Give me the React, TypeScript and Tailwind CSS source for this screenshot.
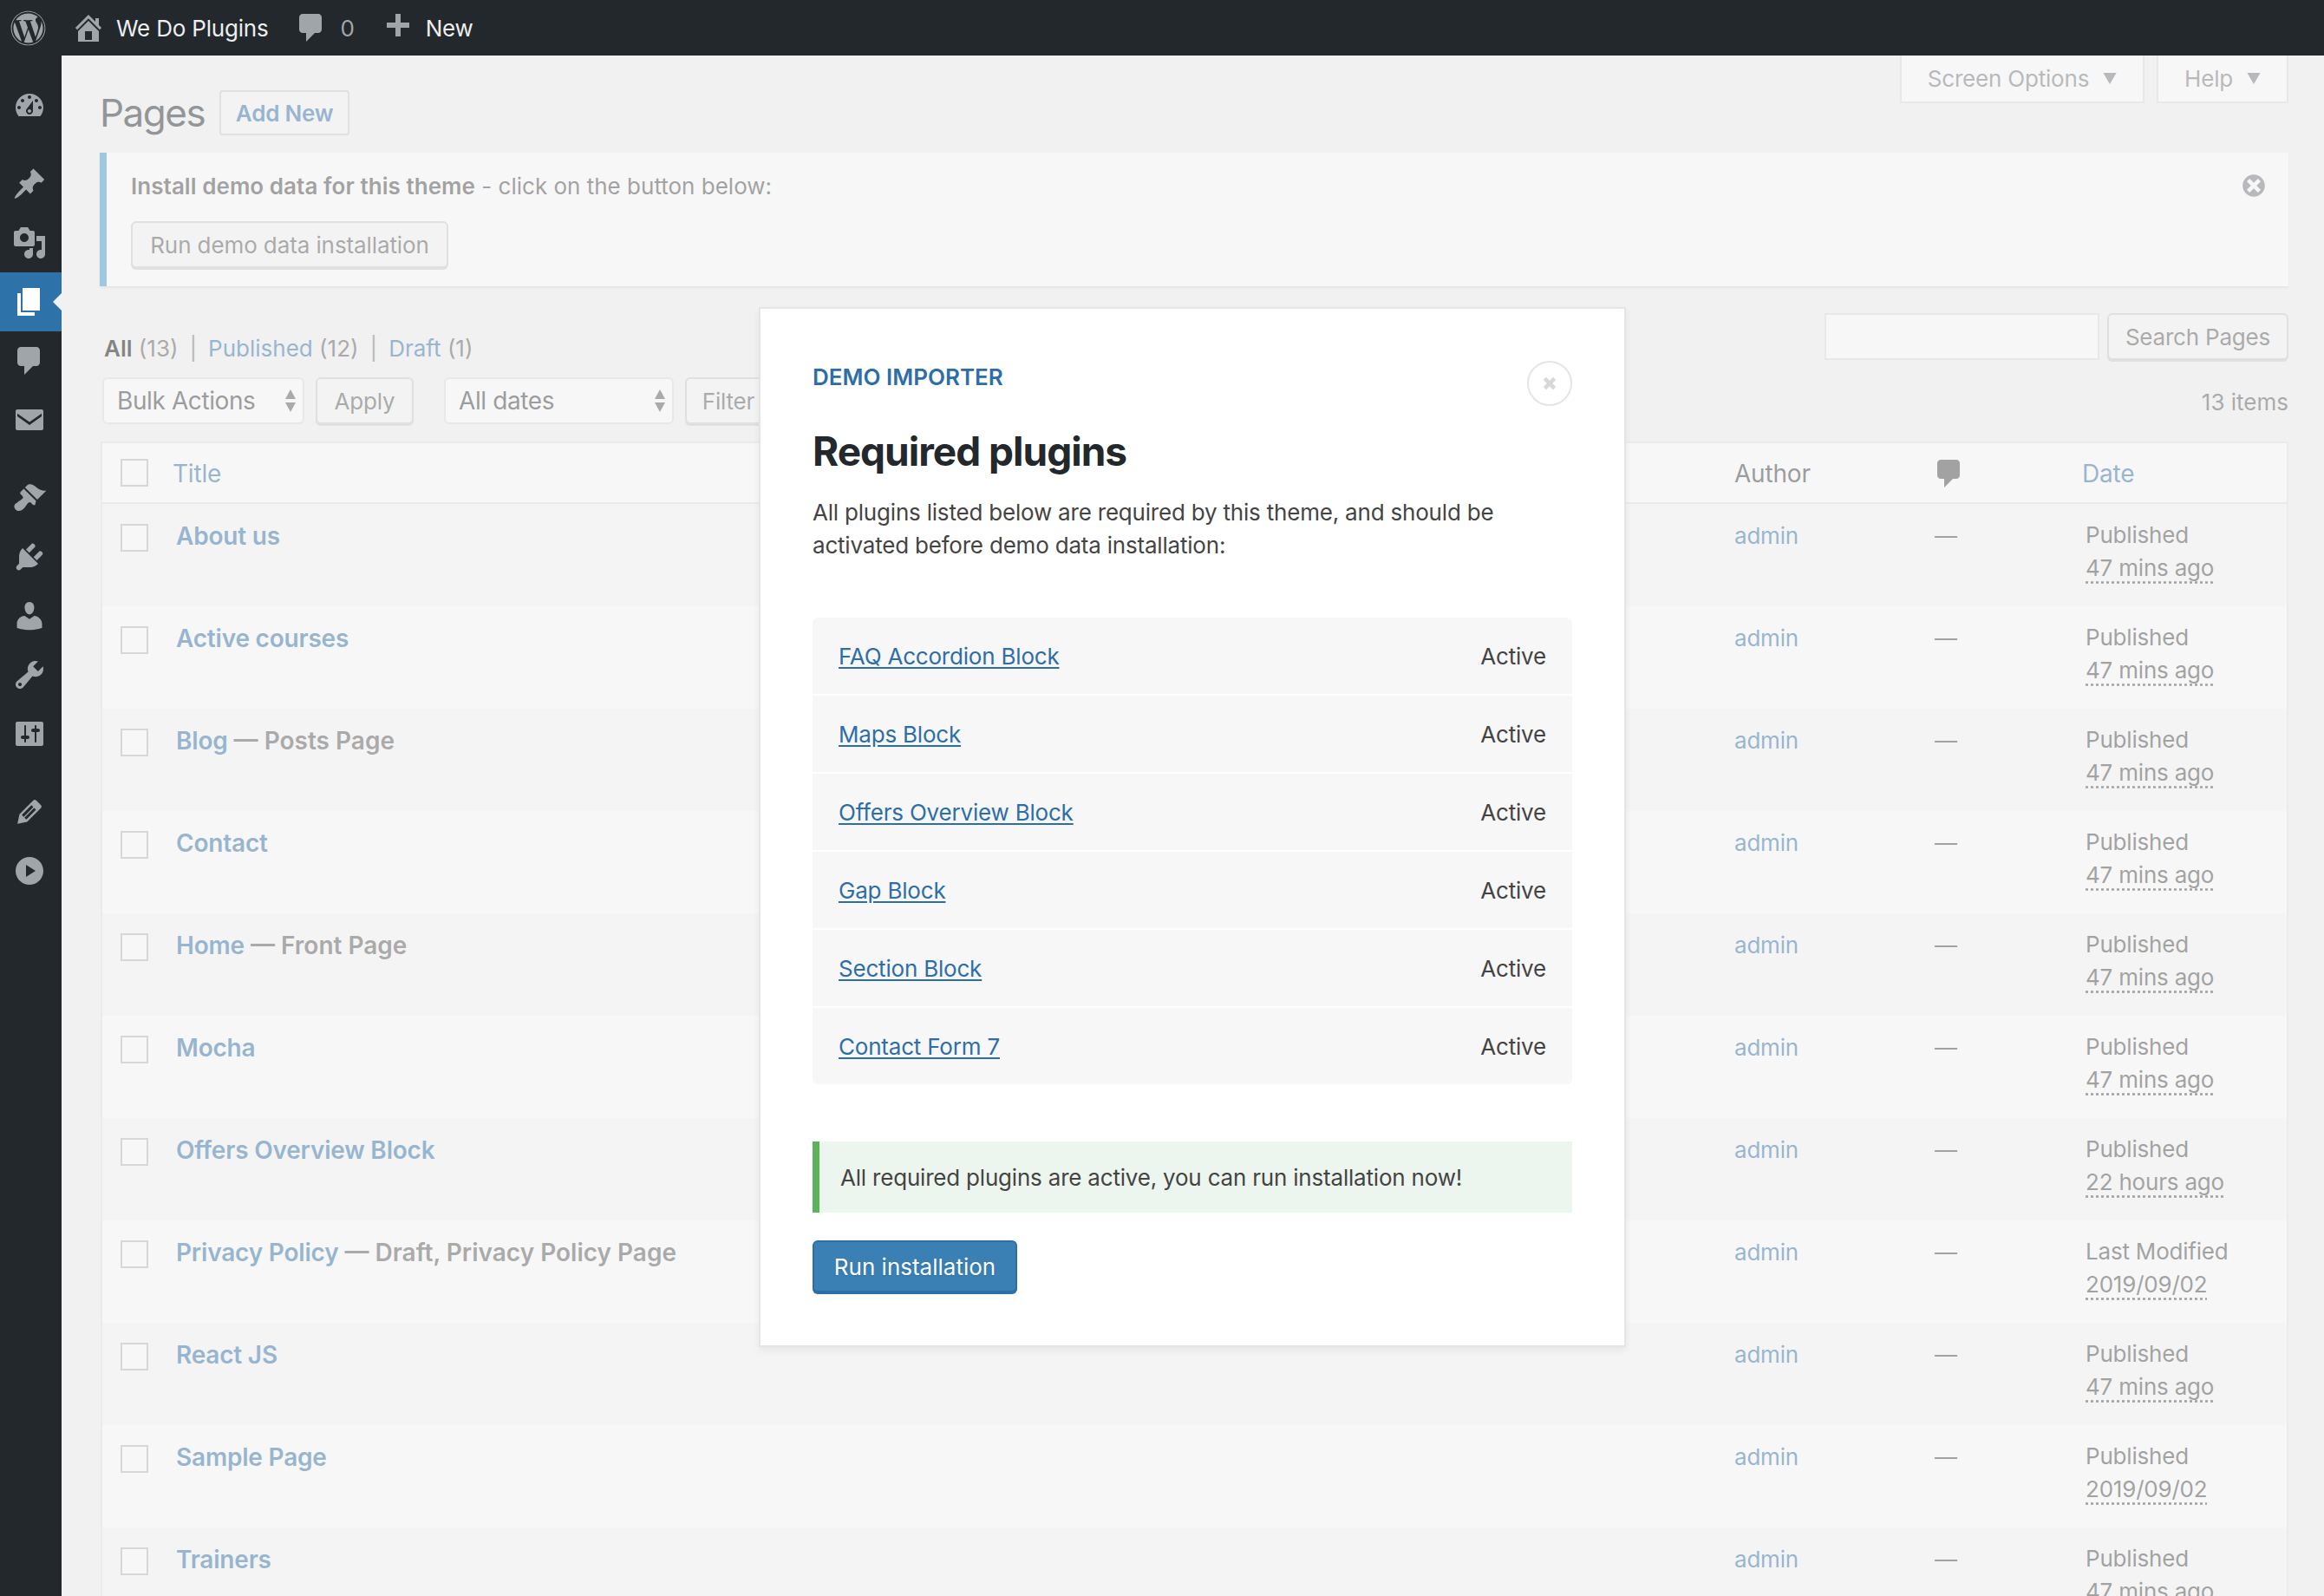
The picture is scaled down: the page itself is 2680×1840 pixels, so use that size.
import React from "react";
import { FaWordpress } from "react-icons/fa";

const P = {
  dashboard: "M3.76 16h12.48c1.1-1.37 1.76-3.11 1.76-5 0-4.42-3.58-8-8-8s-8 3.58-8 8c0 1.89.66 3.63 1.76 5zM10 4c.55 0 1 .45 1 1s-.45 1-1 1-1-.45-1-1 .45-1 1-1zM6 6c.55 0 1 .45 1 1s-.45 1-1 1-1-.45-1-1 .45-1 1-1zm8 0c.55 0 1 .45 1 1s-.45 1-1 1-1-.45-1-1 .45-1 1-1zm-5.37 5.55L12 7v6c0 1.1-.9 2-2 2s-2-.9-2-2c0-.57.24-1.08.63-1.45zM4 10c.55 0 1 .45 1 1s-.45 1-1 1-1-.45-1-1 .45-1 1-1zm12 0c.55 0 1 .45 1 1s-.45 1-1 1-1-.45-1-1 .45-1 1-1zm-5 3c0-.55-.45-1-1-1s-1 .45-1 1 .45 1 1 1 1-.45 1-1z",
  pin: "M10.44 3.02l1.82-1.82 6.36 6.35-1.83 1.82c-1.05-.68-2.48-.57-3.41.36l-.75.75c-.92.93-1.04 2.35-.35 3.41l-1.83 1.82-2.41-2.41-2.8 2.79c-.42.42-3.38 2.71-3.8 2.29s1.86-3.39 2.28-3.81l2.79-2.79L4.1 9.36l1.83-1.82c1.05.69 2.48.57 3.4-.36l.75-.75c.93-.92 1.05-2.35.36-3.41z",
  media: "M13 11V4c0-.55-.45-1-1-1h-1.67L9 1H5L3.67 3H2c-.55 0-1 .45-1 1v7c0 .55.45 1 1 1h10c.55 0 1-.45 1-1zM7 4.5c1.38 0 2.5 1.12 2.5 2.5S8.38 9.5 7 9.5 4.5 8.38 4.5 7 5.62 4.5 7 4.5zM14 6h5v10.5c0 1.38-1.12 2.5-2.5 2.5S14 17.88 14 16.5s1.12-2.5 2.5-2.5c.17 0 .34.02.5.05V9h-3V6zm-4 8.05V13h2v3.5c0 1.38-1.12 2.5-2.5 2.5S7 17.88 7 16.5 8.12 14 9.5 14c.17 0 .34.02.5.05z",
  page: "M6 15V2h10v13H6zm-1 1h8v2H3V5h2v11z",
  comment: "M5 2h9c1.1 0 2 .9 2 2v7c0 1.1-.9 2-2 2h-2l-5 5v-5H5c-1.1 0-2-.9-2-2V4c0-1.1.9-2 2-2z",
  mail: "M3 4h14c.55 0 1 .45 1 1v10c0 .55-.45 1-1 1H3c-.55 0-1-.45-1-1V5c0-.55.45-1 1-1zm0 2.4v1.6l7 5 7-5V6.4l-7 4.8z",
  brush: "M14.48 11.06L7.41 3.99l1.5-1.5c.5-.56 2.3-.47 3.51.32 1.21.8 1.43 1.28 2.91 2.1 1.18.64 2.45 1.26 4.45.85zm-.71.71L6.7 4.7 4.93 6.47c-.39.39-.39 1.02 0 1.41l1.06 1.06c.39.39.39 1.03 0 1.42-.6.6-1.43 1.11-2.21 1.69-.35.26-.7.53-1.01.84C1.43 13.23.5 15.19 2.03 16.72c1.53 1.53 3.49.6 4.83-.74.31-.31.58-.66.84-1.01.58-.78 1.09-1.61 1.69-2.21.39-.39 1.03-.39 1.42 0l1.06 1.06c.39.39 1.02.39 1.41 0z",
  plug: "M13.11 4.36L9.87 7.6 8 5.73l3.24-3.24c.35-.34 1.05-.2 1.56.32.52.51.66 1.21.31 1.55zm-8 1.77l.91-1.12 9.01 9.01-1.19.84c-.71.71-2.63 1.16-3.82 1.16H6.14L4.9 17.26c-.59.59-1.54.59-2.12 0-.59-.58-.59-1.53 0-2.12l1.24-1.24v-3.88c0-1.13.4-3.19 1.09-3.89zm7.26 3.97l3.24-3.24c.34-.35 1.04-.21 1.55.31.52.51.66 1.21.31 1.55l-3.24 3.25z",
  user: "M10 9.25c-2.27 0-2.73-3.44-2.73-3.44C7 4.02 7.82 2 9.97 2c2.16 0 2.98 2.02 2.71 3.81 0 0-.41 3.44-2.68 3.44zm0 2.57L12.72 10c2.39 0 4.52 2.33 4.52 4.53v2.49s-3.65 1.13-7.24 1.13c-3.65 0-7.24-1.13-7.24-1.13v-2.49c0-2.25 1.94-4.48 4.47-4.48z",
  tools: "M16.68 9.77c-1.34 1.34-3.3 1.67-4.95.99l-5.41 6.52c-.99.99-2.59.99-3.58 0s-.99-2.59 0-3.57l6.52-5.42c-.68-1.65-.35-3.61.99-4.95 1.28-1.28 3.12-1.62 4.72-1.06l-2.89 2.89 2.82 2.82 2.86-2.87c.53 1.58.18 3.39-1.08 4.65zM3.81 16.21c.4.39 1.04.39 1.43 0 .4-.4.4-1.04 0-1.43-.39-.4-1.03-.4-1.43 0-.39.39-.39 1.03 0 1.43z",
  settings: "M18 16V4c0-.55-.45-1-1-1H3c-.55 0-1 .45-1 1v12c0 .55.45 1 1 1h14c.55 0 1-.45 1-1zM8 11h1c.55 0 1 .45 1 1s-.45 1-1 1H8v1.5c0 .28-.22.5-.5.5s-.5-.22-.5-.5V13H6c-.55 0-1-.45-1-1s.45-1 1-1h1V5.5c0-.28.22-.5.5-.5s.5.22.5.5V11zm5-2h-1c-.55 0-1-.45-1-1s.45-1 1-1h1V5.5c0-.28.22-.5.5-.5s.5.22.5.5V7h1c.55 0 1 .45 1 1s-.45 1-1 1h-1v5.5c0 .28-.22.5-.5.5s-.5-.22-.5-.5V9z",
  edit: "M13.89 3.39l2.71 2.72c.46.46.42 1.24.03 1.64l-8.01 8.02-5.56 1.16 1.16-5.58s7.6-7.63 7.99-8.03c.39-.39 1.22-.39 1.68.07zm-2.73 2.79l-5.59 5.61 1.11 1.11 5.54-5.65zm-2.97 8.23l5.58-5.6-1.07-1.08-5.59 5.6z",
  play: "M10 2c4.42 0 8 3.58 8 8s-3.58 8-8 8-8-3.58-8-8 3.58-8 8-8zM8 6.5v7l5.5-3.5z",
  home: "M16 8.5l1.53 1.53-1.06 1.06L10 4.62l-6.47 6.47-1.06-1.06L10 2.5l4 4v-2h2v4zm-6-2.46l6 5.99V18H4v-5.97zM12 17v-5H8v5h4z",
  plus: "M17 7v3h-5v5H9v-5H4V7h5V2h3v5h5z",
  dismiss: "M10 2c4.42 0 8 3.58 8 8s-3.58 8-8 8-8-3.58-8-8 3.58-8 8-8zm5 11l-3-3 3-3-2-2-3 3-3-3-2 2 3 3-3 3 2 2 3-3 3 3z",
};

function Dash({ d, className }: { d: string; className: string }) {
  return (
    <svg viewBox="0 0 20 20" className={className} fill="currentColor" fillRule="evenodd">
      <path d={d} />
    </svg>
  );
}

function MenuItem({ d, active }: { d: string; active?: boolean }) {
  return (
    <div className={"relative h-[68px] flex items-center pl-[14px] " + (active ? "bg-[#2e72aa] text-white" : "text-[#a0a5aa]")}>
      <Dash d={d} className="w-10 h-10" />
      {active && (
        <span className="absolute right-0 top-1/2 -translate-y-1/2 w-0 h-0 border-y-[10px] border-y-transparent border-r-[10px] border-r-[#f1f1f1]" />
      )}
    </div>
  );
}

function SortArrows() {
  return (
    <svg viewBox="0 0 14 26" className="w-[14px] h-[26px] text-[#555]" fill="currentColor">
      <path d="M7 0l6 11H1zM7 26L1 15h12z" />
    </svg>
  );
}

function Check() {
  return <span className="block w-8 h-8 bg-white border-2 border-[#b4b9be]" />;
}

function Btn({ children, className = "" }: { children: React.ReactNode; className?: string }) {
  return (
    <div className={"flex items-center justify-center bg-[#f7f7f7] border-2 border-[#ccc] rounded-[6px] shadow-[0_2px_0_#ccc] text-[26px] text-[#555] " + className}>
      {children}
    </div>
  );
}

const rows = [
  { t: "About us", s: "", st: "Published", d: "47 mins ago" },
  { t: "Active courses", s: "", st: "Published", d: "47 mins ago" },
  { t: "Blog", s: "Posts Page", st: "Published", d: "47 mins ago" },
  { t: "Contact", s: "", st: "Published", d: "47 mins ago" },
  { t: "Home", s: "Front Page", st: "Published", d: "47 mins ago" },
  { t: "Mocha", s: "", st: "Published", d: "47 mins ago" },
  { t: "Offers Overview Block", s: "", st: "Published", d: "22 hours ago" },
  { t: "Privacy Policy", s: "Draft, Privacy Policy Page", st: "Last Modified", d: "2019/09/02" },
  { t: "React JS", s: "", st: "Published", d: "47 mins ago" },
  { t: "Sample Page", s: "", st: "Published", d: "2019/09/02" },
  { t: "Trainers", s: "", st: "Published", d: "47 mins ago" },
];

const plugins = ["FAQ Accordion Block", "Maps Block", "Offers Overview Block", "Gap Block", "Section Block", "Contact Form 7"];

export default function App() {
  return (
    <div className="w-[2680px] h-[1840px] overflow-hidden flex flex-col bg-[#23282d] font-['Inter',sans-serif] text-[26px] leading-[39px] tracking-[-0.2px] text-[#444]">
      {/* admin bar */}
      <header className="h-16 shrink-0 flex items-center bg-[#23282d] text-[#eee]">
        <FaWordpress className="w-[41px] h-[41px] ml-3 text-[#a0a5aa]" />
        <Dash d={P.home} className="w-10 h-10 ml-[29px] text-[#a0a5aa]" />
        <span className="ml-3">We Do Plugins</span>
        <Dash d={P.comment} className="w-10 h-10 ml-[30px] text-[#a0a5aa]" />
        <span className="ml-[13px] text-[#a0a5aa]">0</span>
        <Dash d={P.plus} className="w-10 h-10 ml-[29px] text-[#a0a5aa]" />
        <span className="ml-[13px]">New</span>
      </header>

      <div className="flex flex-1 min-h-0">
        {/* sidebar */}
        <nav className="w-[71px] shrink-0 pt-6 bg-[#23282d]">
          <MenuItem d={P.dashboard} />
          <div className="h-[22px]" />
          <MenuItem d={P.pin} />
          <MenuItem d={P.media} />
          <MenuItem d={P.page} active />
          <MenuItem d={P.comment} />
          <MenuItem d={P.mail} />
          <div className="h-[22px]" />
          <MenuItem d={P.brush} />
          <MenuItem d={P.plug} />
          <MenuItem d={P.user} />
          <MenuItem d={P.tools} />
          <MenuItem d={P.settings} />
          <div className="h-[22px]" />
          <MenuItem d={P.edit} />
          <MenuItem d={P.play} />
        </nav>

        {/* content */}
        <main className="relative flex-1 min-w-0 overflow-hidden bg-[#f1f1f1]">
          <div className="pl-[45px] pr-[41px]">
            {/* screen meta */}
            <div className="h-[55px] flex justify-end gap-[14px] text-[#72777c]">
              <div className="w-[282px] flex items-center justify-center gap-[16px] bg-white border-2 border-t-0 border-[#ddd] pb-[1px]">
                <span>Screen Options</span>
                <svg viewBox="0 0 14 12" className="w-4 h-[13px]" fill="currentColor"><path d="M0 0h14L7 12z" /></svg>
              </div>
              <div className="w-[152px] flex items-center justify-center gap-[16px] bg-white border-2 border-t-0 border-[#ddd] pb-[1px]">
                <span>Help</span>
                <svg viewBox="0 0 14 12" className="w-4 h-[13px]" fill="currentColor"><path d="M0 0h14L7 12z" /></svg>
              </div>
            </div>

            {/* heading */}
            <div className="-mt-[15px] h-[52px] flex items-center gap-[17px]">
              <h1 className="-ml-px text-[44px] leading-[58px] tracking-[-1.5px] text-[#23282d]">Pages</h1>
              <div className="h-[52px] w-[150px] flex items-center justify-center bg-[#f7f7f7] border-2 border-[#ccc] rounded-[4px] font-semibold text-[#2e6ea8]">
                Add New
              </div>
            </div>

            {/* notice */}
            <div className="relative mt-5 h-[154px] -ml-px bg-white border-l-8 border-[#3a98d0] shadow-[0_2px_2px_rgba(0,0,0,0.1)] pl-[28px] pt-[19px]">
              <p className="tracking-normal">
                <span className="font-semibold tracking-[0.05px] text-[#444]">Install demo data for this theme</span> - click on the button below:
              </p>
              <Btn className="mt-[21px] w-[366px] h-[54px] tracking-[-0.1px]">Run demo data installation</Btn>
              <Dash d={P.dismiss} className="absolute right-[24px] top-[22px] w-8 h-8 text-[#72777c]" />
            </div>

            {/* filters + search */}
            <div className="mt-[31px] h-[56px] flex justify-between">
              <div className="pl-1 pt-[21px] flex gap-[13px] tracking-normal">
                <span><span className="font-semibold text-[#000]">All</span> <span className="text-[#555]">(13)</span></span>
                <span className="text-[#72777c]">|</span>
                <span><span className="text-[#2e6ea8]">Published</span> <span className="text-[#555]">(12)</span></span>
                <span className="text-[#72777c]">|</span>
                <span><span className="text-[#2e6ea8]">Draft</span> <span className="text-[#555]">(1)</span></span>
              </div>
              <div className="flex gap-[9px]">
                <div className="w-[317px] h-[54px] bg-white border-2 border-[#ddd]" />
                <Btn className="w-[209px] h-[54px]">Search Pages</Btn>
              </div>
            </div>

            {/* bulk actions */}
            <div className="mt-[18px] h-[56px] flex items-center text-[#555]">
              <div className="self-start ml-[2px] w-[233px] h-[54px] flex items-center justify-between pl-[15px] pr-[7px] bg-white border-2 border-[#ddd] rounded-[6px] text-[28px] tracking-[-0.4px] text-[#32373c]">
                <span>Bulk Actions</span>
                <SortArrows />
              </div>
              <Btn className="self-start ml-[13px] w-[113px] h-[54px]">Apply</Btn>
              <div className="self-start ml-[35px] w-[265px] h-[54px] flex items-center justify-between pl-[15px] pr-[7px] bg-white border-2 border-[#ddd] rounded-[6px] text-[28px] tracking-[-0.4px] text-[#32373c]">
                <span>All dates</span>
                <SortArrows />
              </div>
              <Btn className="self-start ml-[13px] w-[100px] h-[54px]">Filter</Btn>
              <span className="ml-auto tracking-normal">13 items</span>
            </div>

            {/* table */}
            <div className="mt-[18px] bg-white border-x-2 border-t-2 border-[#e5e5e5]">
              <div className="h-[70px] pt-[2px] grid grid-cols-[1882px_230px_1fr] border-b-2 border-[#e1e1e1] items-center">
                <div className="flex items-center gap-[28px] pl-[21px] text-[28px] text-[#2e6ea8]">
                  <span className="-mt-[2px]"><Check /></span>
                  <span>Title</span>
                </div>
                <span className="text-[28px] text-[#32373c]">Author</span>
                <div className="flex items-center">
                  <Dash d={P.comment} className="w-10 h-10 -ml-[2px] text-[#444]" />
                  <span className="ml-[133px] text-[28px] text-[#2e6ea8]">Date</span>
                </div>
              </div>
              {rows.map((r, i) => (
                <div key={r.t} className={"h-[118px] grid grid-cols-[1882px_230px_1fr] pt-[17px] " + (i % 2 === 0 ? "bg-[#f9f9f9]" : "bg-white")}>
                  <div className="flex gap-[32px] pl-[21px]">
                    <span className="mt-[6px]"><Check /></span>
                    <span className="mt-[1px] text-[28px] font-semibold">
                      <span className="text-[#2e6ea8]">{r.t}</span>
                      {r.s && <span className="text-[#555] tracking-normal"> — {r.s}</span>}
                    </span>
                  </div>
                  <span className="text-[#2e6ea8]">admin</span>
                  <div className="flex">
                    <span className="w-[175px] pl-[1px]">—</span>
                    <div className="flex flex-col leading-[38px]">
                      <span>{r.st}</span>
                      <span className="underline decoration-dotted underline-offset-[6px]">{r.d}</span>
                    </div>
                  </div>
                </div>
              ))}
            </div>
          </div>

          {/* dim layer */}
          <div className="absolute inset-0 bg-[#f0f0f0]/55" />

          {/* modal */}
          <section className="absolute left-[804px] top-[290px] w-[1000px] bg-white border-2 border-[#e5e5e5] shadow-[0_4px_8px_rgba(0,0,0,0.06)] px-[60px] pt-[59px] pb-[61px]">
            <div className="font-semibold tracking-normal text-[#2e6ea8] uppercase">Demo Importer</div>
            <div className="absolute top-[60px] right-[60px] w-[52px] h-[52px] flex items-center justify-center rounded-full border-2 border-[#e5e5e5] text-[#d8d8d8]">
              <svg viewBox="0 0 16 16" className="w-[18px] h-[18px]" fill="none" stroke="currentColor" strokeWidth="4"><path d="M3 3l10 10M13 3L3 13" /></svg>
            </div>
            <h2 className="mt-[38px] text-[46px] leading-[56px] font-bold text-[#23282d] tracking-[-1px]">Required plugins</h2>
            <p className="mt-[24px] leading-[38px]">
              All plugins listed below are required by this theme, and should be<br />activated before demo data installation:
            </p>
            <ul className="mt-[64px] flex flex-col gap-[2px] rounded-[6px] overflow-hidden">
              {plugins.map((p) => (
                <li key={p} className="h-[88px] flex items-center justify-between px-[30px] bg-[#f7f7f7]">
                  <span className="text-[#2e6ea8] underline underline-offset-[3px]">{p}</span>
                  <span>Active</span>
                </li>
              ))}
            </ul>
            <div className="mt-[66px] h-[82px] flex items-center pl-[24px] bg-[#edf6ee] border-l-8 border-[#5cb35c]">
              All required plugins are active, you can run installation now!
            </div>
            <div className="mt-[32px] w-[236px] h-[60px] flex items-center justify-center bg-[#3a80b4] border-2 border-[#2e6ea6] rounded-[6px] shadow-[0_2px_0_#2e6ea6] tracking-normal text-white [text-shadow:0_1px_2px_#2e6ea6]">
              Run installation
            </div>
          </section>
        </main>
      </div>
    </div>
  );
}
